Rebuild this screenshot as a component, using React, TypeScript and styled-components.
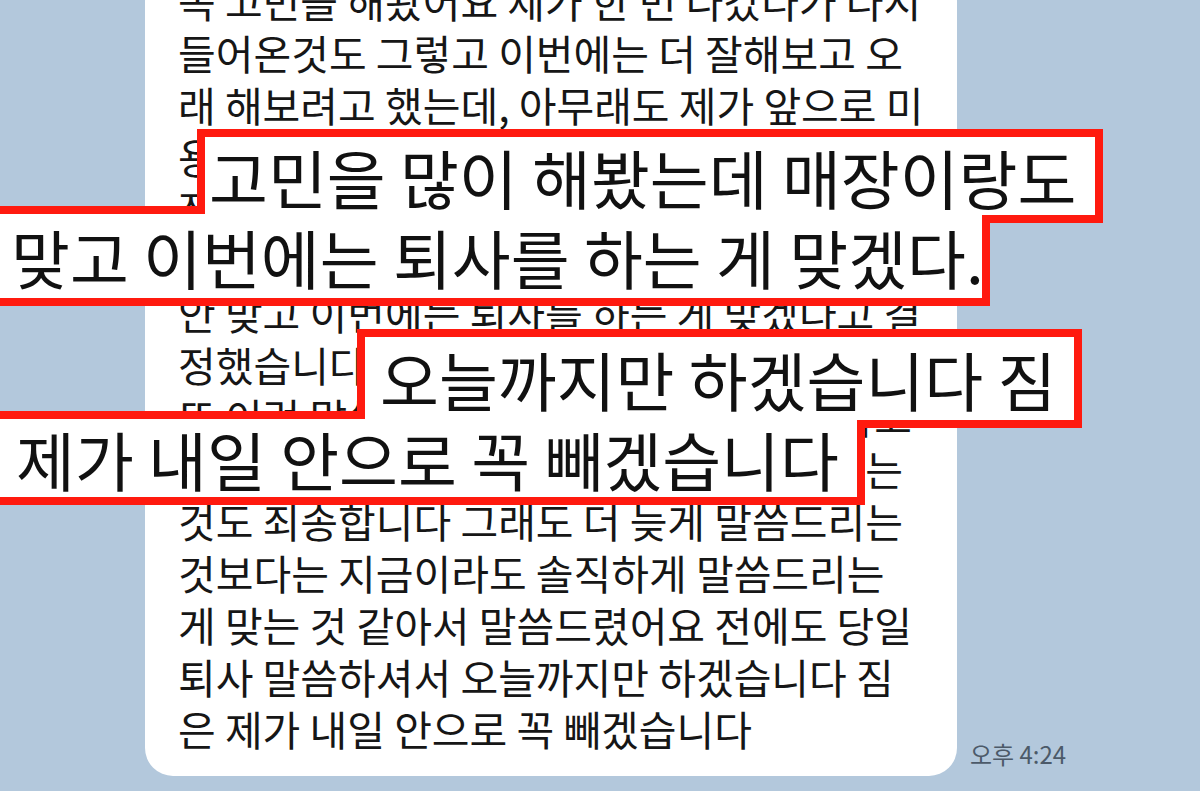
import React from 'react';
import styled, { createGlobalStyle } from 'styled-components';

const GlobalStyle = createGlobalStyle`
  html, body {
    margin: 0;
    padding: 0;
    background: #b3c8dc;
  }
  body {
    font-family: "Noto Sans CJK KR", "Noto Sans", sans-serif;
  }
`;

const Page = styled.div`
  position: relative;
  width: 1200px;
  height: 791px;
  overflow: hidden;
  background: #b3c8dc;
  display: flex;
  align-items: flex-end;
  padding: 0 0 15px 145px;
  box-sizing: border-box;
`;

const Bubble = styled.div`
  flex: none;
  width: 812px;
  box-sizing: border-box;
  background: #ffffff;
  border-radius: 28px;
  padding: 0 30px 22px 33px;
`;

const Line = styled.div`
  font-size: 41px;
  line-height: 52px;
  height: 52px;
  color: #161616;
  white-space: nowrap;
`;

const Time = styled.div`
  flex: none;
  margin: 0 0 7px 13px;
  font-size: 24px;
  line-height: 30px;
  color: #4c5a69;
  white-space: nowrap;
`;

const Caption = styled.div<{ $top: number }>`
  position: absolute;
  left: 0;
  top: ${p => p.$top}px;
  width: 1200px;
  display: flex;
  flex-direction: column;
  filter: drop-shadow(8px 0 0 #ff1a0f) drop-shadow(-8px 0 0 #ff1a0f)
    drop-shadow(0 8px 0 #ff1a0f) drop-shadow(0 -8px 0 #ff1a0f);
`;

const CaptionRow = styled.div<{ $left: number; $right: number; $height: number; $pad: number }>`
  margin-left: ${p => p.$left}px;
  width: ${p => p.$right - p.$left}px;
  height: ${p => p.$height}px;
  line-height: ${p => p.$height}px;
  padding-left: ${p => p.$pad}px;
  box-sizing: border-box;
  background: #ffffff;
  font-size: 64px;
  color: #111111;
  white-space: nowrap;
  overflow: hidden;
  & + & {
    margin-top: -1px;
  }
`;

const lines = [
  '꼭 고민을 해봤어요 제가 한 번 나갔다가 다시',
  '들어온것도 그렇고 이번에는 더 잘해보고 오',
  '래 해보려고 했는데, 아무래도 제가 앞으로 미',
  '용 일을 계속할 거라서 고민을 많이 해봤는데 매',
  '장이랑도 안 맞는 것 같고 여러모로 생각해 봤는',
  '데 이번에는 그만두는 게 맞다고 생각했어요 매장',
  '안 맞고 이번에는 퇴사를 하는 게 맞겠다고 결',
  '정했습니다 갑자기 말씀드리게 되어서 정말 죄송',
  '또 이런 말씀을 드리게 되어서 너무 죄송하고',
  '만두는 것도 이렇게 갑자기 말씀드리게 되는',
  '것도 죄송합니다 그래도 더 늦게 말씀드리는',
  '것보다는 지금이라도 솔직하게 말씀드리는',
  '게 맞는 것 같아서 말씀드렸어요 전에도 당일',
  '퇴사 말씀하셔서 오늘까지만 하겠습니다 짐',
  '은 제가 내일 안으로 꼭 빼겠습니다',
];

export default function App() {
  return (
    <>
      <GlobalStyle />
      <Page>
        <Bubble>
          {lines.map((l, i) => (
            <Line key={i}>{l}</Line>
          ))}
        </Bubble>
        <Time>오후 4:24</Time>

        <Caption $top={137}>
          <CaptionRow $left={205} $right={1095} $height={78} $pad={4}>
            고민을 많이 해봤는데 매장이랑도
          </CaptionRow>
          <CaptionRow $left={-20} $right={982} $height={84} $pad={31}>
            맞고 이번에는 퇴사를 하는 게 맞겠다.
          </CaptionRow>
        </Caption>

        <Caption $top={337}>
          <CaptionRow $left={365} $right={1074} $height={83} $pad={15}>
            오늘까지만 하겠습니다 짐
          </CaptionRow>
          <CaptionRow $left={-20} $right={857} $height={78} $pad={36}>
            제가 내일 안으로 꼭 빼겠습니다
          </CaptionRow>
        </Caption>
      </Page>
    </>
  );
}
